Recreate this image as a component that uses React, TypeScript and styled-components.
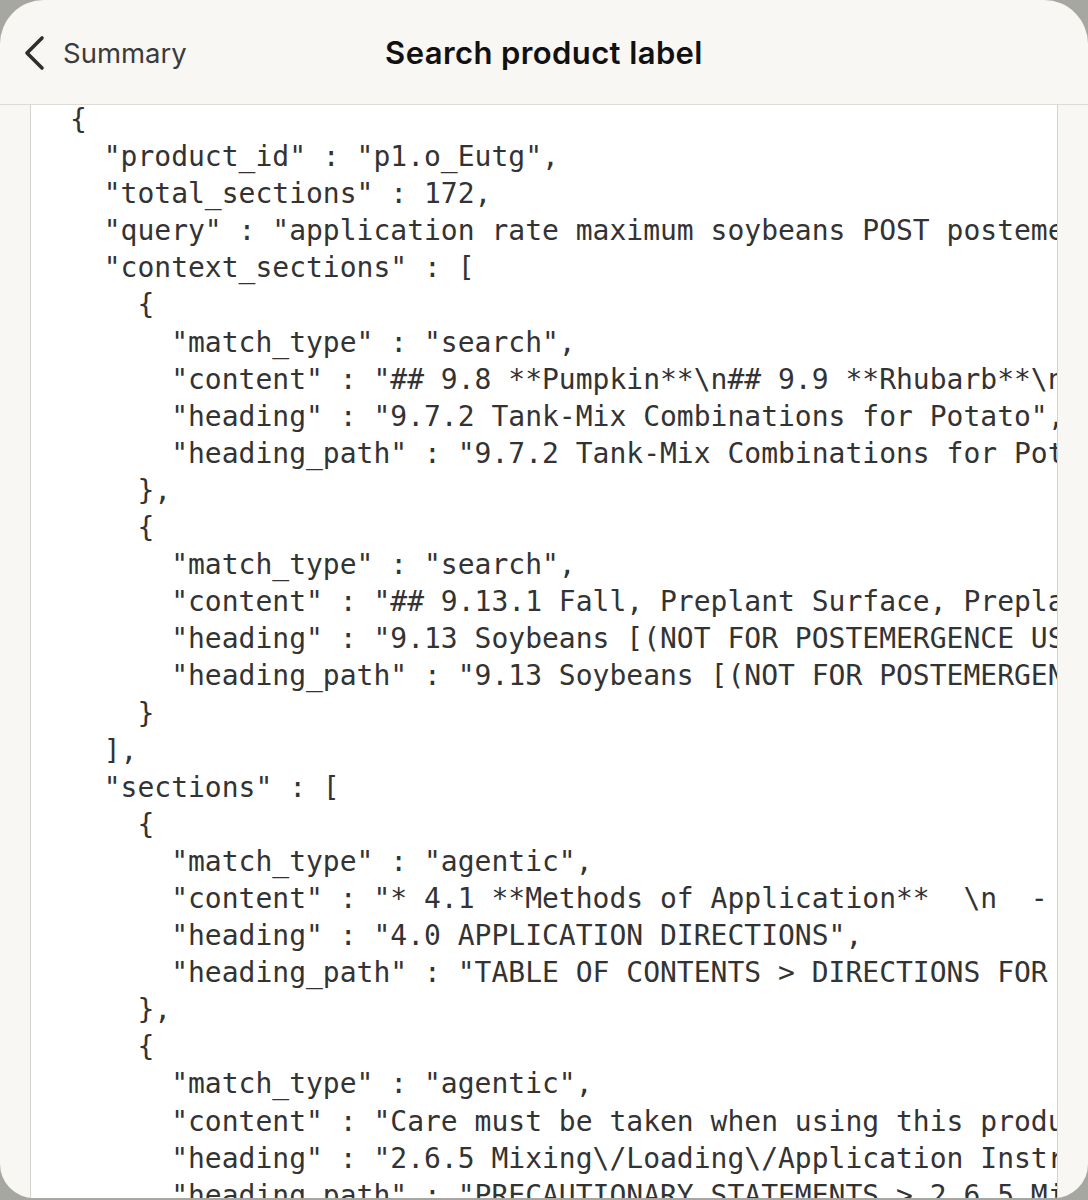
import React from "react";
import styled, { createGlobalStyle } from "styled-components";

const Global = createGlobalStyle`
  html, body { margin: 0; padding: 0; background: #a7a7a1; }
  #root { width: 1088px; height: 1200px; }
`;

const Backdrop = styled.div`
  width: 1088px;
  height: 1200px;
  background: #a7a7a1;
  overflow: hidden;
`;

const Sheet = styled.div`
  width: 1088px;
  height: 1198px;
  background: #f8f7f3;
  border-radius: 44px 44px 34px 34px;
  overflow: hidden;
  display: flex;
  flex-direction: column;
`;

const Header = styled.header`
  height: 105px;
  flex: none;
  box-sizing: border-box;
  border-bottom: 1px solid #dddcd7;
  display: grid;
  grid-template-columns: 1fr auto 1fr;
  align-items: center;
  padding: 0 22px;
`;

const Back = styled.button`
  justify-self: start;
  display: flex;
  align-items: center;
  gap: 15px;
  background: none;
  border: none;
  padding: 0;
  margin-top: 2px;
  font-family: Inter, "Noto Sans", sans-serif;
  font-size: 27.5px;
  color: #3b3b3b;
  cursor: pointer;
`;

const Title = styled.h1`
  margin: 0;
  font-family: Inter, "Noto Sans", sans-serif;
  font-size: 31px;
  font-weight: 600;
  color: #111;
  letter-spacing: 0.4px;
`;

const Body = styled.div`
  flex: 1;
  padding: 0 30px;
  display: flex;
  min-height: 0;
`;

const Panel = styled.div`
  flex: 1;
  background: #ffffff;
  border-left: 1px solid #d3d3cf;
  border-right: 1px solid #d3d3cf;
  overflow: hidden;
  padding-left: 39px;
`;

const Code = styled.pre`
  margin: -4px 0 0 0;
  font-family: "DejaVu Sans Mono", "Liberation Mono", monospace;
  font-size: 28px;
  line-height: 37.1px;
  color: #333333;
  white-space: pre;
`;

const lines = [
  `{`,
  `  "product_id" : "p1.o_Eutg",`,
  `  "total_sections" : 172,`,
  `  "query" : "application rate maximum soybeans POST postemergence",`,
  `  "context_sections" : [`,
  `    {`,
  `      "match_type" : "search",`,
  `      "content" : "## 9.8 **Pumpkin**\\n## 9.9 **Rhubarb**\\n## 9.10",`,
  `      "heading" : "9.7.2 Tank-Mix Combinations for Potato",`,
  `      "heading_path" : "9.7.2 Tank-Mix Combinations for Potato"`,
  `    },`,
  `    {`,
  `      "match_type" : "search",`,
  `      "content" : "## 9.13.1 Fall, Preplant Surface, Preplant",`,
  `      "heading" : "9.13 Soybeans [(NOT FOR POSTEMERGENCE USE)]",`,
  `      "heading_path" : "9.13 Soybeans [(NOT FOR POSTEMERGENCE USE)]"`,
  `    }`,
  `  ],`,
  `  "sections" : [`,
  `    {`,
  `      "match_type" : "agentic",`,
  `      "content" : "* 4.1 **Methods of Application**  \\n  - Ground",`,
  `      "heading" : "4.0 APPLICATION DIRECTIONS",`,
  `      "heading_path" : "TABLE OF CONTENTS > DIRECTIONS FOR USE"`,
  `    },`,
  `    {`,
  `      "match_type" : "agentic",`,
  `      "content" : "Care must be taken when using this product",`,
  `      "heading" : "2.6.5 Mixing\\/Loading\\/Application Instructions",`,
  `      "heading_path" : "PRECAUTIONARY STATEMENTS > 2.6.5 Mixing"`,
];

const ChevronLeft = () => (
  <svg width="26" height="36" viewBox="0 0 26 36" fill="none">
    <path d="M20 3 L5 18 L20 33" stroke="#2e2e2e" strokeWidth="3.6" strokeLinecap="round" strokeLinejoin="round" />
  </svg>
);

export default function App() {
  return (
    <>
      <Global />
      <Backdrop>
        <Sheet>
          <Header>
            <Back>
              <ChevronLeft />
              Summary
            </Back>
            <Title>Search product label</Title>
            <div />
          </Header>
          <Body>
            <Panel>
              <Code>{lines.join("\n")}</Code>
            </Panel>
          </Body>
        </Sheet>
      </Backdrop>
    </>
  );
}
